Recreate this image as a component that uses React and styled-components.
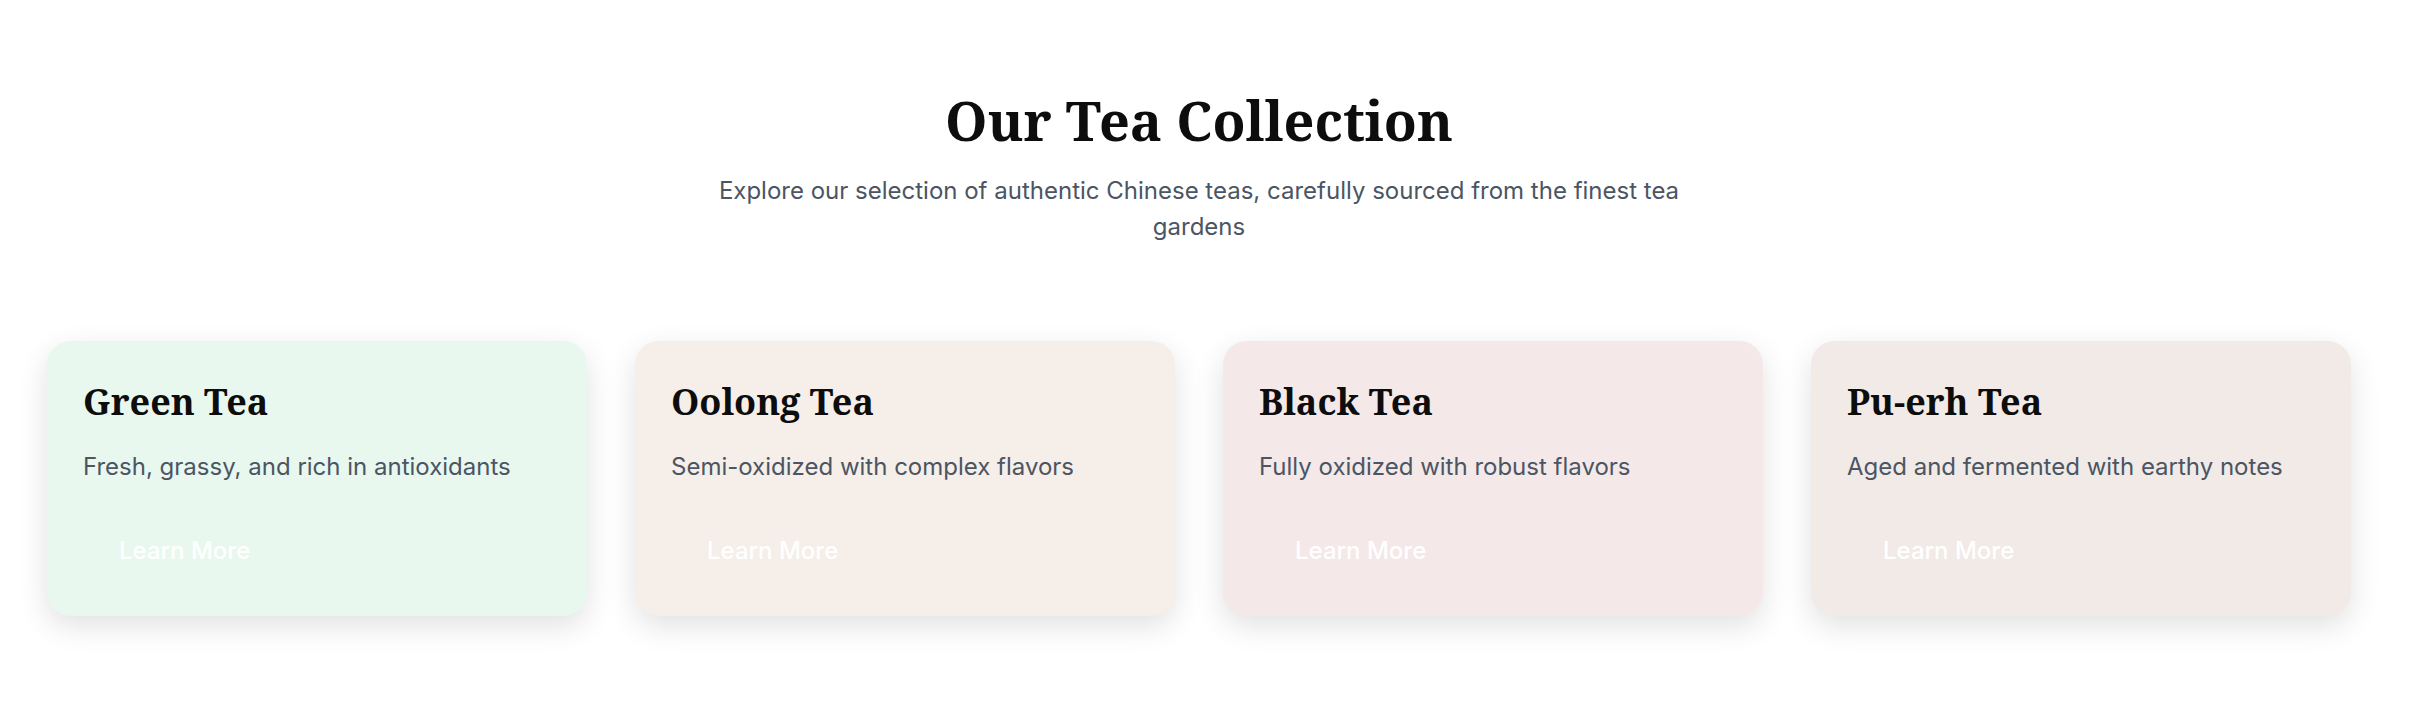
import React from "react";
import styled, { createGlobalStyle } from "styled-components";

const GlobalStyle = createGlobalStyle`
  html, body { margin: 0; padding: 0; background: #ffffff; }
  body { font-family: Inter, "Noto Sans", sans-serif; }
`;

const Section = styled.section`
  padding: 88px 77px 80px 47px;
  display: flex;
  flex-direction: column;
  align-items: center;
`;

const Title = styled.h2`
  margin: 0;
  font-family: "Noto Serif", "DejaVu Serif", serif;
  font-weight: 700;
  font-size: 54px;
  line-height: 65px;
  color: #0d0d0d;
  text-align: center;
`;

const Subtitle = styled.p`
  margin: 20px 0 0;
  max-width: 980px;
  font-family: Inter, sans-serif;
  font-size: 24px;
  line-height: 36px;
  color: #4b5563;
  text-align: center;
`;

const Grid = styled.div`
  margin-top: 96px;
  width: 100%;
  display: grid;
  grid-template-columns: repeat(4, 1fr);
  gap: 48px;
`;

const Card = styled.div`
  background: ${(p) => p.$bg};
  border-radius: 24px;
  padding: 39px 36px 37px;
  box-shadow: 0 10px 30px rgba(0, 0, 0, 0.12);
  display: flex;
  flex-direction: column;
  align-items: flex-start;
`;

const CardTitle = styled.h3`
  margin: 0 0 26px;
  font-family: "Noto Serif", "DejaVu Serif", serif;
  font-weight: 700;
  font-size: 36px;
  line-height: 43px;
  color: #0d0d0d;
`;

const CardText = styled.p`
  margin: 0 0 37px;
  font-family: Inter, sans-serif;
  font-size: 24px;
  line-height: 36px;
  color: #4b5563;
`;

const LearnButton = styled.button`
  background: transparent;
  border: none;
  padding: 14px 36px;
  font-family: Inter, sans-serif;
  font-weight: 500;
  font-size: 24px;
  line-height: 29px;
  color: #ffffff;
  cursor: pointer;
  border-radius: 8px;
`;

const teas = [
  { name: "Green Tea", desc: "Fresh, grassy, and rich in antioxidants", bg: "#e8f8ef" },
  { name: "Oolong Tea", desc: "Semi-oxidized with complex flavors", bg: "#f6eee8" },
  { name: "Black Tea", desc: "Fully oxidized with robust flavors", bg: "#f4e8e8" },
  { name: "Pu-erh Tea", desc: "Aged and fermented with earthy notes", bg: "#f1eae7" },
];

export default function App() {
  return (
    <>
      <GlobalStyle />
      <Section>
        <Title>Our Tea Collection</Title>
        <Subtitle>
          Explore our selection of authentic Chinese teas, carefully sourced from the finest tea gardens
        </Subtitle>
        <Grid>
          {teas.map((t) => (
            <Card key={t.name} $bg={t.bg}>
              <CardTitle>{t.name}</CardTitle>
              <CardText>{t.desc}</CardText>
              <LearnButton>Learn More</LearnButton>
            </Card>
          ))}
        </Grid>
      </Section>
    </>
  );
}
